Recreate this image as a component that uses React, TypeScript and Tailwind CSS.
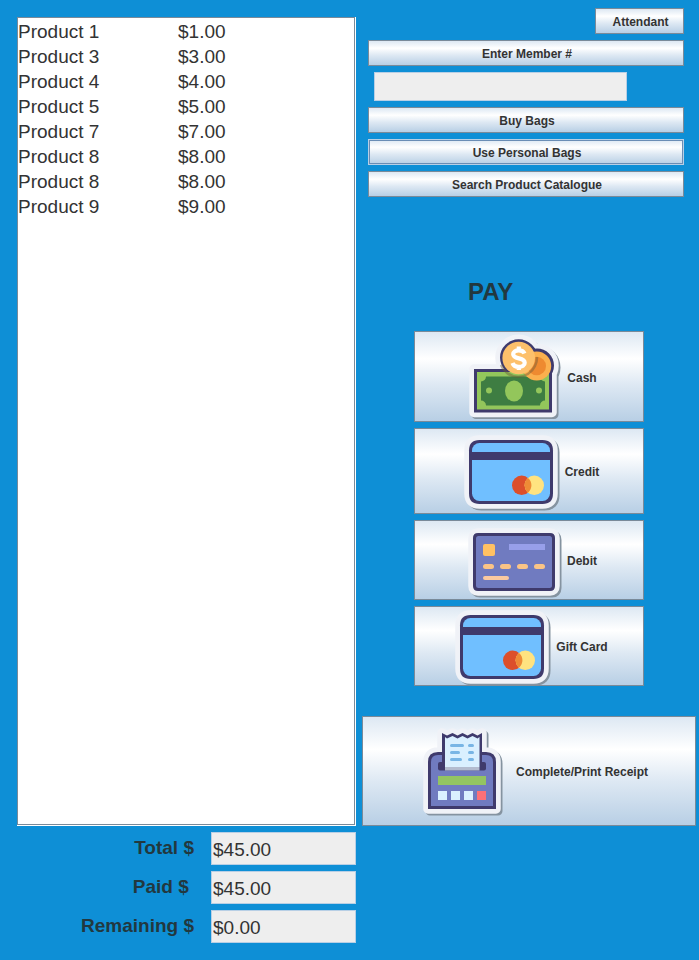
import React from "react";

const products = [
  { name: "Product 1", price: "$1.00" },
  { name: "Product 3", price: "$3.00" },
  { name: "Product 4", price: "$4.00" },
  { name: "Product 5", price: "$5.00" },
  { name: "Product 7", price: "$7.00" },
  { name: "Product 8", price: "$8.00" },
  { name: "Product 8", price: "$8.00" },
  { name: "Product 9", price: "$9.00" },
];

const totals = [
  { id: "total", label: "Total $", value: "$45.00" },
  { id: "paid", label: "Paid $ ", value: "$45.00" },
  { id: "remaining", label: "Remaining $", value: "$0.00" },
];

const INK = "#3f3a6c";

/* Sticker-style base: drop shadow, white rim and dark silhouette. */
function Sticker({ d, children }: { d: string; children: React.ReactNode }) {
  return (
    <svg viewBox="0 0 100 100" className="size-[100px] shrink-0" aria-hidden="true">
      <path d={d} transform="translate(2 2)" fill="#8593a0" stroke="#8593a0" strokeWidth="9" strokeLinejoin="round" />
      <path d={d} fill="#f0f2f7" stroke="#f0f2f7" strokeWidth="9.500" strokeLinejoin="round" />
      <path d={d} fill={INK} />
      {children}
    </svg>
  );
}

function CashIcon() {
  return (
    <Sticker d="M11 41H89V84.5H11ZM37 29.500a18.700 18.200 0 1 1 37.400 0a18.700 18.200 0 1 1 -37.400 0ZM57 37.500a17 17 0 1 1 34 0a17 17 0 1 1 -34 0Z">
      <rect x="14" y="44" width="72" height="37.5" fill="#93c65b" />
      <path d="M23 48.5H77a5 5 0 0 0 5 5V72.500a5 5 0 0 0 -5 5H23a5 5 0 0 0 -5 -5V53.500a5 5 0 0 0 5 -5Z" fill="#3e7d42" />
      <ellipse cx="51" cy="63" rx="9" ry="10.500" fill="#93c65b" />
      <circle cx="26" cy="62.500" r="3" fill="#93c65b" />
      <circle cx="76" cy="62.500" r="3" fill="#93c65b" />
      <circle cx="73.700" cy="38" r="14.500" fill="#fbb04e" />
      <circle cx="73.700" cy="38" r="9.300" fill="#ee8a30" />
      <path d="M38 37a18.500 18.500 0 0 0 34 1a18 18 0 0 0 2 -9" fill="none" stroke="#6b5a3a" strokeOpacity="0.450" strokeWidth="2.500" />
      <circle cx="55.700" cy="30" r="16.300" fill="#fdc06b" />
      <path d="M61.500 25.500c-1 -2.300 -3.200 -3.200 -5.800 -3.200c-3.200 0 -5.500 1.500 -5.500 4c0 5.600 11.500 2.600 11.500 8.400c0 2.700 -2.600 4.200 -5.800 4.200c-3 0 -5.500 -1.200 -6.400 -3.900M55.800 18.500V23M55.800 38V42" fill="none" stroke="#fff" strokeWidth="4.200" />
    </Sticker>
  );
}

function CreditIcon() {
  return (
    <Sticker d="M18.500 18H81.500Q92 18 92 28.500V71.500Q92 82 81.500 82H18.500Q8 82 8 71.500V28.500Q8 18 18.500 18Z">
      <rect x="11" y="21" width="78" height="58" rx="7.500" fill="#70bfff" />
      <rect x="9" y="30" width="82" height="8" fill={INK} />
      <circle cx="60.700" cy="63.300" r="9.700" fill="#dc4f2b" />
      <circle cx="73.300" cy="63.300" r="9.700" fill="#ffe380" />
      <path d="M67 55.900a9.700 9.700 0 0 1 0 14.800a9.700 9.700 0 0 1 0 -14.800Z" fill="#ee8b36" />
    </Sticker>
  );
}

function DebitIcon() {
  return (
    <Sticker d="M15 22H87Q92 22 92 27V75Q92 80 87 80H15Q10 80 10 75V27Q10 22 15 22Z">
      <rect x="13" y="25" width="76" height="52" rx="2.500" fill="#707bc0" />
      <rect x="20" y="33" width="12" height="12" rx="2" fill="#ffc163" />
      <rect x="46" y="33" width="36" height="6" fill="#979fea" />
      <rect x="20" y="53" width="11" height="5" rx="2.500" fill="#fac486" />
      <rect x="37" y="53" width="11" height="5" rx="2.500" fill="#fac486" />
      <rect x="54" y="53" width="11" height="5" rx="2.500" fill="#fac486" />
      <rect x="71" y="53" width="11" height="5" rx="2.500" fill="#fac486" />
      <rect x="20" y="65" width="26" height="4" rx="2" fill="#fac9a0" />
    </Sticker>
  );
}

function ReceiptIcon() {
  return (
    <Sticker d="M30 30V11L35 13.500L40.500 11L45.500 13.500L50.500 11L55.500 13.500L60.500 11L65.500 13.500L70 11V30H74Q84 30 84 40V87H16V40Q16 30 26 30Z">
      <path d="M26 33H74Q81 33 81 40V84H19V40Q19 33 26 33Z" fill="#707bc0" />
      <path d="M30 32H70V40H30Z" fill={INK} />
      <rect x="26" y="40" width="48" height="8.500" rx="2" fill={INK} />
      <path d="M33 15L35 16.500L40.500 14L45.500 16.500L50.500 14L55.500 16.500L60.500 14L65.500 16.500L67.500 15V45H33Z" fill="#daf0ff" />
      <rect x="33" y="45" width="34.500" height="3.500" fill="#b3bccf" />
      <g fill="#78b5e5">
        <rect x="38" y="22" width="14" height="3" rx="1.500" />
        <rect x="56" y="22" width="6" height="3" rx="1.500" />
        <rect x="38" y="29" width="10" height="3" rx="1.500" />
        <rect x="56" y="29" width="6" height="3" rx="1.500" />
        <rect x="38" y="36" width="12" height="3" rx="1.500" />
        <rect x="56" y="36" width="6" height="3" rx="1.500" />
      </g>
      <rect x="26" y="54" width="48" height="9" fill="#93c462" />
      <rect x="26" y="69" width="9" height="9" fill="#daf0ff" />
      <rect x="39" y="69" width="9" height="9" fill="#daf0ff" />
      <rect x="52" y="69" width="9" height="9" fill="#daf0ff" />
      <rect x="65" y="69" width="9" height="9" fill="#fb7078" />
    </Sticker>
  );
}

const face =
  "flex items-center justify-center gap-1 border bg-[linear-gradient(#dde8f3,#ffffff_30%,#dde8f3_60%,#b8cfe5)] pl-0.5 pt-0.5 text-xs font-bold text-[#333333]";

function Button({ className, children }: { className: string; children: React.ReactNode }) {
  return (
    <button type="button" className={`${face} ${className}`}>
      {children}
    </button>
  );
}

export default function App() {
  return (
    <main className="min-h-screen bg-[#0e8fd6] pl-[17px] pr-[3px] font-['Liberation_Sans',Arial,sans-serif] text-[#333333]">
      <div className="grid grid-cols-[339fr_334fr] gap-x-1.5">
        <section className="mt-[17px] border-b border-r border-white bg-white">
          <div className="h-full border border-[#7a8a99] pt-px">
            <table className="w-full table-fixed text-[19px] leading-[25px]">
              <colgroup>
                <col className="w-[160px]" />
                <col />
              </colgroup>
              <tbody>
                {products.map((p, i) => (
                  <tr key={i}>
                    <td className="p-0">{p.name}</td>
                    <td className="p-0">{p.price}</td>
                  </tr>
                ))}
              </tbody>
            </table>
          </div>
        </section>

        <section className="flex flex-col pt-2">
          <div className="flex flex-col gap-1.5 pl-1.5 pr-3">
            <Button className="h-[26px] w-[89px] self-end border-[#7a8a99]">Attendant</Button>
            <Button className="h-[26px] border-[#7a8a99]">Enter Member #</Button>
            <input
              type="text"
              aria-label="Member number"
              readOnly
              className="ml-1.5 mr-[57px] h-[29px] border border-[#b8cfe5] bg-[#eeeeee] px-1"
            />
            <Button className="h-[26px] border-[#7a8a99]">Buy Bags</Button>
            <Button className="h-[26px] border-[#b8cfe5] ring-1 ring-inset ring-[#6a8db5]">Use Personal Bags</Button>
            <Button className="h-[26px] border-[#7a8a99]">Search Product Catalogue</Button>
          </div>

          <div className="mx-[52px] mt-[81px] flex flex-col gap-1.5">
            <h2 className="mb-[19px] pl-[54px] text-2xl font-bold leading-[28px] text-[#22383f]">PAY</h2>
            <Button className="h-[91px] border-[#7a8a99]"><CashIcon />Cash</Button>
            <Button className="h-[86px] border-[#7a8a99]"><CreditIcon />Credit</Button>
            <Button className="h-[80px] border-[#7a8a99]"><DebitIcon />Debit</Button>
            <Button className="h-[80px] border-[#7a8a99]"><CreditIcon />Gift Card</Button>
          </div>

          <Button className="mt-[30px] h-[110px] border-[#7a8a99]"><ReceiptIcon />Complete/Print Receipt</Button>
        </section>

        <section className="mt-1.5 flex flex-col gap-1.5 pb-4">
          {totals.map((t) => (
            <div key={t.id} className="flex items-center justify-end gap-[17px] text-[19px]">
              <label htmlFor={t.id} className="whitespace-pre font-bold text-[#22383f]">{t.label}</label>
              <input
                id={t.id}
                type="text"
                readOnly
                value={t.value}
                className="h-[33px] w-[145px] border border-[#b8cfe5] bg-[#eeeeee] px-px pt-0.5"
              />
            </div>
          ))}
        </section>
      </div>
    </main>
  );
}
